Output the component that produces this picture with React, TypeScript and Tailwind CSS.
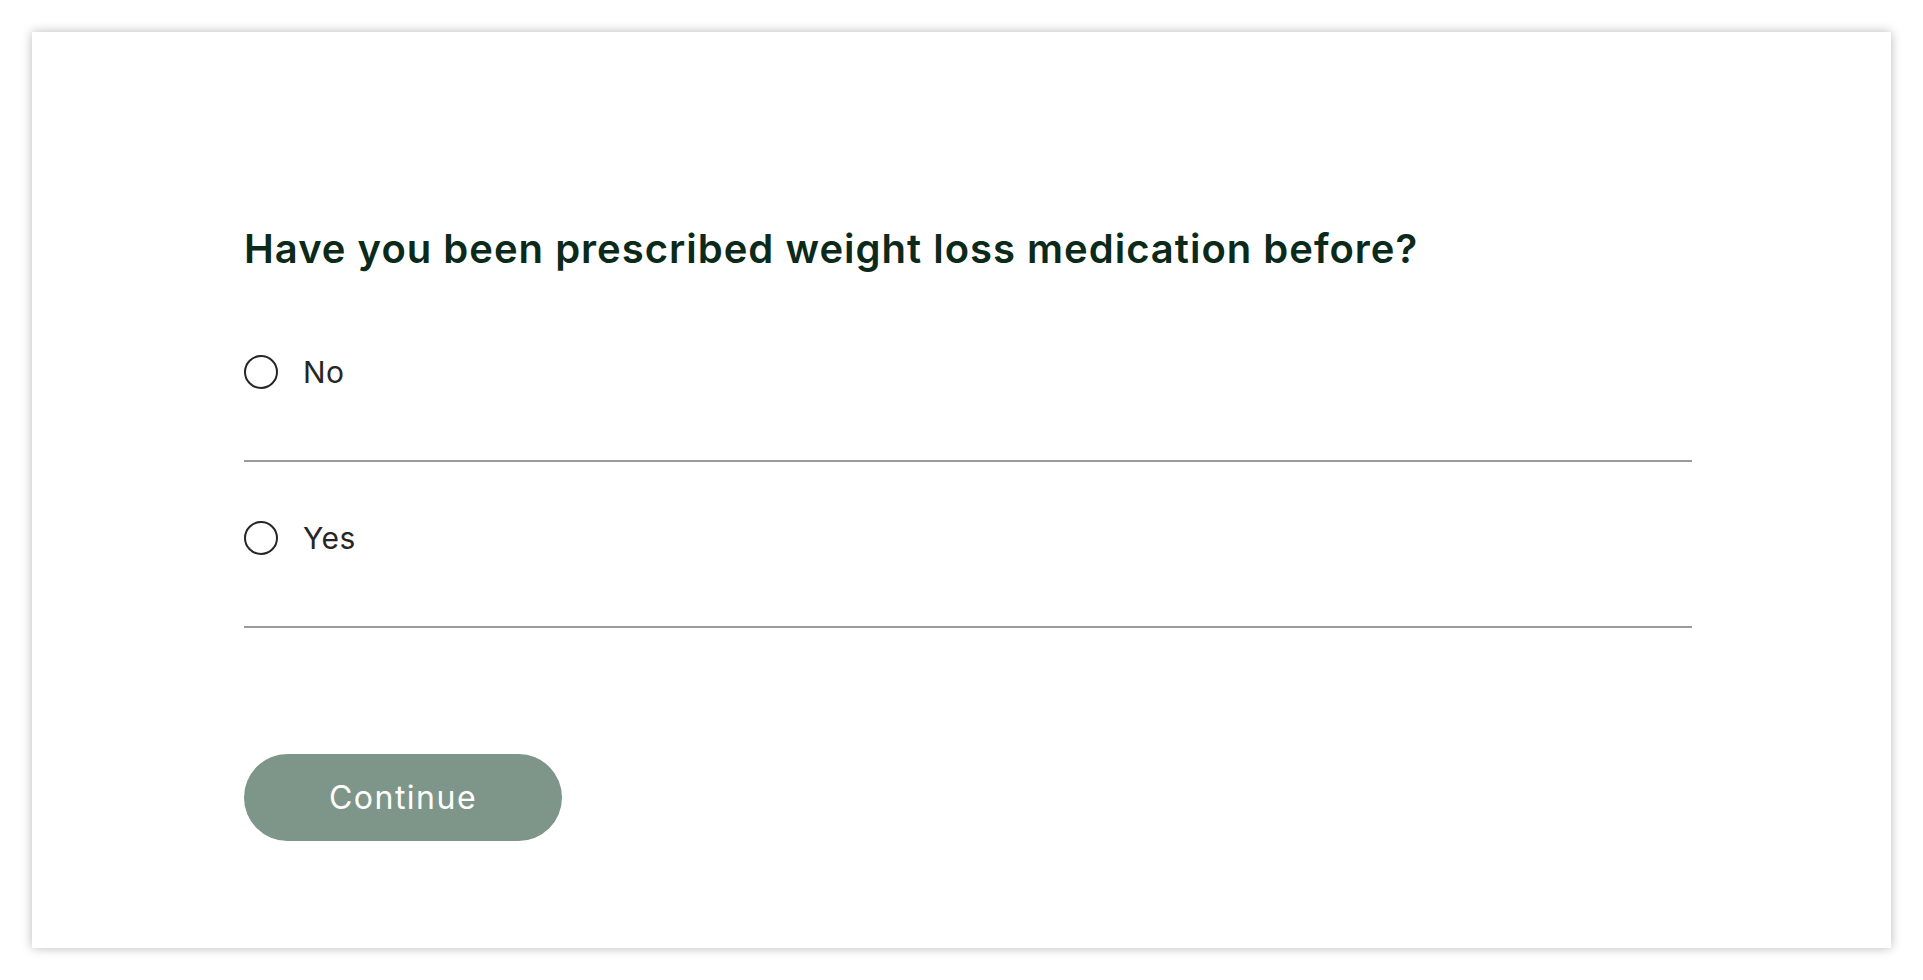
import { useState } from 'react';

const OPTIONS = ['No', 'Yes'];

export default function App() {
  const [value, setValue] = useState<string | null>(null);

  return (
    <div className="min-h-screen bg-white p-8" style={{ fontFamily: 'Inter, "Liberation Sans", sans-serif' }}>
      <div className="h-[916px] bg-white pl-[212px] pr-[199px] pt-[193px] shadow-[0_0_10px_rgba(0,0,0,0.28)]">
        <h1 className="text-[40px] leading-[48px] font-semibold tracking-[1px] text-[#0b2a1a]">
          Have you been prescribed weight loss medication before?
        </h1>

        <div className="mt-[23px]">
          {OPTIONS.map((opt) => (
            <label
              key={opt}
              className="flex cursor-pointer items-center gap-[25px] border-b-2 border-[#9a9a9a] pt-[58px] pb-[70px]"
            >
              <input
                type="radio"
                name="prescribed"
                className="sr-only"
                checked={value === opt}
                onChange={() => setValue(opt)}
              />
              <span className="flex h-[34px] w-[34px] shrink-0 items-center justify-center rounded-full border-2 border-[#262626]">
                {value === opt && <span className="h-[18px] w-[18px] rounded-full bg-[#0b2a1a]" />}
              </span>
              <span className="text-[30px] leading-9 tracking-[0.5px] text-[#262626]">{opt}</span>
            </label>
          ))}
        </div>

        <button
          type="button"
          className="mt-[126px] flex h-[87px] w-[318px] items-center justify-center rounded-full bg-[#7e9689] text-[32px] tracking-[1.5px] text-white"
        >
          Continue
        </button>
      </div>
    </div>
  );
}
